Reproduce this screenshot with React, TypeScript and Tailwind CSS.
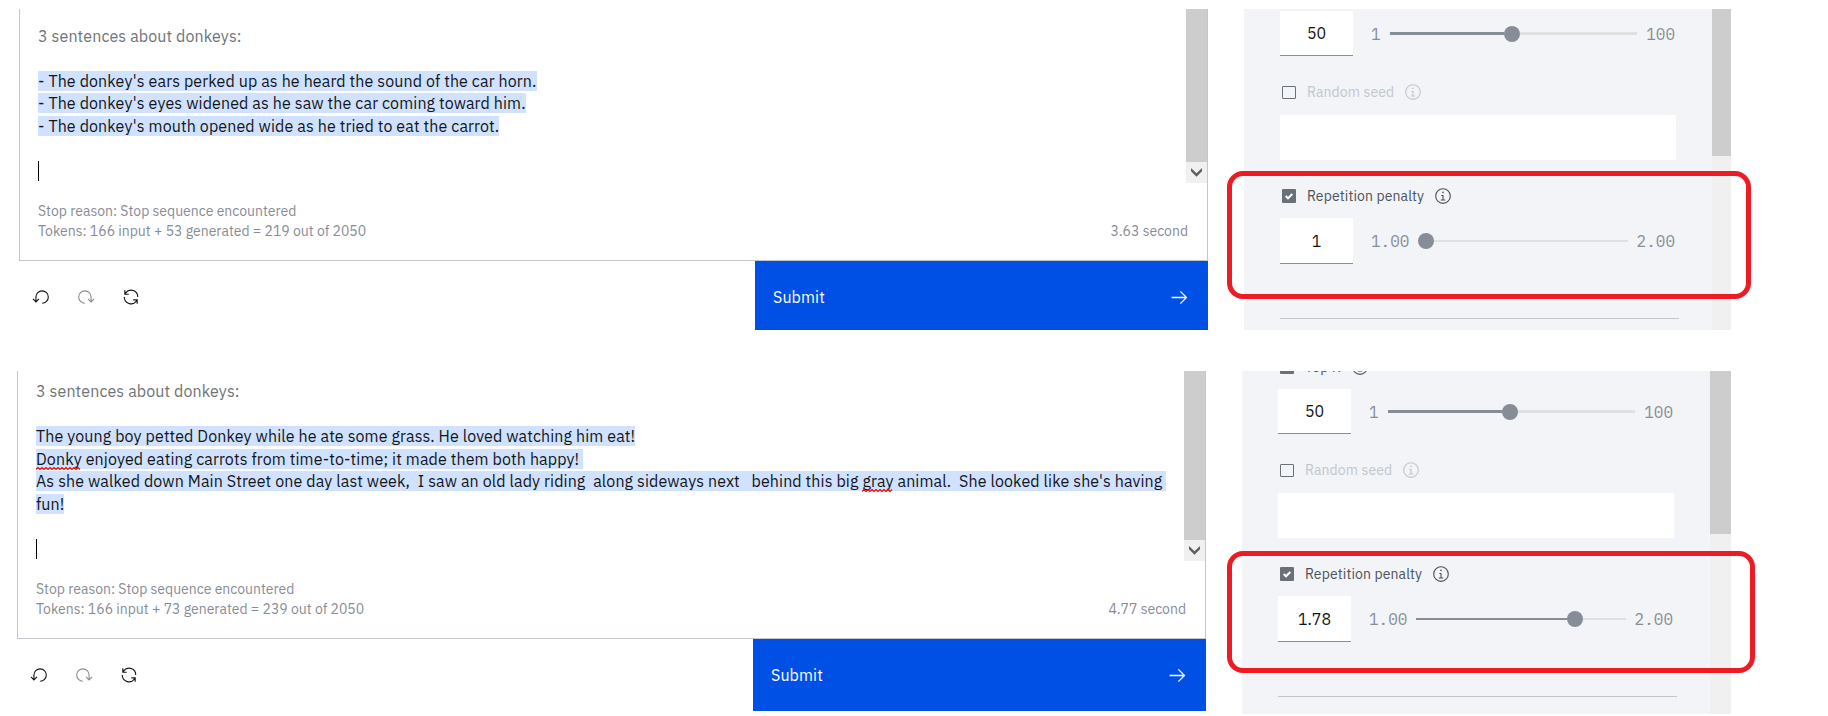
import type { ReactNode } from "react";

const SANS = "font-['IBM_Plex_Sans',Roboto,sans-serif]";
const MONO = "font-['IBM_Plex_Mono','Liberation_Mono',monospace]";

function UndoIcon() {
  return (
    <svg width="18" height="18" viewBox="0 0 32 32" fill="#161616">
      <path d="M18,28A12,12,0,1,0,6,16v6.2L2.4,18.6,1,20l6,6,6-6-1.4-1.4L8,22.2V16H8A10,10,0,1,1,18,26Z" />
    </svg>
  );
}

function RedoIcon() {
  return (
    <svg width="18" height="18" viewBox="0 0 32 32" fill="#8d8d8d">
      <path
        transform="translate(32 0) scale(-1 1)"
        d="M18,28A12,12,0,1,0,6,16v6.2L2.4,18.6,1,20l6,6,6-6-1.4-1.4L8,22.2V16H8A10,10,0,1,1,18,26Z"
      />
    </svg>
  );
}

function RenewIcon() {
  return (
    <svg width="18" height="18" viewBox="0 0 32 32" fill="#161616">
      <path d="M12,10H6.78A11,11,0,0,1,27,16h2A13,13,0,0,0,6,7.68V4H4v8h8Z" />
      <path d="M20,22h5.22A11,11,0,0,1,5,16H3a13,13,0,0,0,23,8.32V28h2V20H20Z" />
    </svg>
  );
}

function ArrowRightIcon() {
  return (
    <svg width="21" height="21" viewBox="0 0 32 32" fill="#ffffff">
      <path d="M18 6L16.57 7.393 24.15 15H4v2H24.15l-7.58 7.573L18 26 28 16z" />
    </svg>
  );
}

function InfoIcon({ muted }: { muted?: boolean }) {
  return (
    <svg width="18" height="18" viewBox="0 0 32 32" fill={muted ? "#c1c7cd" : "#4d5358"}>
      <path d="M17 22V14H13v2h2v6H12v2h8V22zM16 8a1.5 1.5 0 1 0 1.5 1.5A1.5 1.5 0 0 0 16 8Z" />
      <path d="M16,30A14,14,0,1,1,30,16,14,14,0,0,1,16,30ZM16,4A12,12,0,1,0,28,16,12,12,0,0,0,16,4Z" />
    </svg>
  );
}

function Line({ children }: { children?: ReactNode }) {
  return <div className="h-[22.5px] whitespace-pre">{children}</div>;
}

function Selected({ children }: { children: ReactNode }) {
  return <span className="bg-[#d0e2ff]">{children}</span>;
}

function Misspelled({ children, width }: { children: string; width: number }) {
  let d = "M0 2.5";
  for (let x = 2, up = true; x <= width; x += 2, up = !up) {
    d += ` L${x} ${up ? 0.5 : 2.5}`;
  }
  return (
    <span className="relative">
      {children}
      <svg className="absolute top-[18px] left-0" width={width} height="3" fill="none" stroke="#f00" strokeWidth="1.2">
        <path d={d} />
      </svg>
    </span>
  );
}

function Caret() {
  return <span className="mt-[1.3px] block h-5 w-px bg-black" />;
}

type EditorProps = {
  scrollClass: string;
  padClass: string;
  toolbarClass: string;
  tokens: string;
  time: string;
  children: ReactNode;
};

function Editor({ scrollClass, padClass, toolbarClass, tokens, time, children }: EditorProps) {
  return (
    <div className="w-[1189px] shrink-0">
      <div className="border-x border-b border-[#c1c7cd]">
        <div className={`flex overflow-hidden ${scrollClass}`}>
          <div className={`flex-1 pl-[18px] text-[16px] leading-[22.5px] tracking-[0.115px] text-[#121619] ${padClass}`}>
            {children}
          </div>
          <div className="flex w-[21px] flex-col">
            <div className="flex-1 bg-[#cdcdcd]" />
            <div className="flex h-[21px] items-center justify-center bg-[#f0f0f0]">
              <svg width="11" height="9" viewBox="0 0 11 9" fill="#606060">
                <path d="M0 0L5.5 5.3 11 0V3.2L5.5 8.7 0 3.2Z" />
              </svg>
            </div>
          </div>
        </div>
        <div className="flex items-end justify-between pt-[18px] pr-[19px] pb-[19px] pl-[18px] text-[14px] leading-5 tracking-[-0.01px] text-[#878d96]">
          <div>
            <div>Stop reason: Stop sequence encountered</div>
            <div>{tokens}</div>
          </div>
          <div>{time}</div>
        </div>
      </div>
      <div className={`flex items-start justify-between overflow-hidden ${toolbarClass}`}>
        <div className="flex h-[72px] items-center gap-[27px] pl-[13px]">
          <UndoIcon />
          <RedoIcon />
          <RenewIcon />
        </div>
        <button className="flex h-[72px] w-[453px] items-center justify-between bg-[#0050e6] px-[18px] text-[16px] tracking-[0.11px] text-white">
          <span>Submit</span>
          <ArrowRightIcon />
        </button>
      </div>
    </div>
  );
}

function Option({ label, checked }: { label: string; checked: boolean }) {
  return (
    <div className="flex h-5 items-center pl-[2px]">
      {checked ? (
        <span className="flex size-[14px] items-center justify-center rounded-[1px] bg-[#697077]">
          <svg width="8" height="7" viewBox="0 0 8 7" fill="none" stroke="#fff" strokeWidth="2">
            <path d="M0.7 3L3 5.3 7.3 1" />
          </svg>
        </span>
      ) : (
        <span className="mt-[1px] h-[13px] w-[14px] rounded-[1px] border border-[#697077]" />
      )}
      <span
        className={`mr-[10px] ml-[11px] text-[14px] leading-5 tracking-[0.12px] ${checked ? "text-[#4d5358]" : "text-[#c1c7cd]"}`}
      >
        {label}
      </span>
      <InfoIcon muted={!checked} />
    </div>
  );
}

type SliderProps = {
  value: string;
  min: string;
  max: string;
  fraction: number;
  boxClass: string;
  trackClass: string;
};

function Slider({ value, min, max, fraction, boxClass, trackClass }: SliderProps) {
  return (
    <div className="flex w-[395px] items-center">
      <div
        className={`flex w-[73px] shrink-0 items-center justify-center border-b border-[#8d8d8d] bg-white text-[16px] text-[#121619] ${boxClass}`}
      >
        {value}
      </div>
      <span className={`mr-[9px] ml-[18px] text-[16px] text-[#878d96] ${MONO}`}>{min}</span>
      <div className="flex flex-1 items-center">
        <div className={`bg-[#878d96] ${trackClass}`} style={{ flex: `${fraction} 1 0px` }} />
        <div className="size-4 shrink-0 rounded-full bg-[#878d96]" />
        <div className={`bg-[#e0e0e0] ${trackClass}`} style={{ flex: `${1 - fraction} 1 0px` }} />
      </div>
      <span className={`ml-[9px] text-[16px] text-[#878d96] ${MONO}`}>{max}</span>
    </div>
  );
}

type ParametersProps = {
  panelClass: string;
  bodyClass: string;
  barClass: string;
  thumbClass: string;
  penalty: string;
  fraction: number;
  topLabel?: boolean;
};

function Parameters({ panelClass, bodyClass, barClass, thumbClass, penalty, fraction, topLabel }: ParametersProps) {
  return (
    <div className={`ml-9 flex shrink-0 overflow-hidden bg-[#f2f4f8] ${panelClass}`}>
      <div className={`flex-1 pl-9 ${bodyClass}`}>
        {topLabel && (
          <div className="-mt-[14px] mb-3">
            <Option label="Top K" checked />
          </div>
        )}
        <Slider value="50" min="1" max="100" fraction={0.495} boxClass="h-[45px]" trackClass="h-[3px]" />
        <div className="mt-[26px] mb-[13px]">
          <Option label="Random seed" checked={false} />
        </div>
        <div className="h-[45px] w-[396px] bg-white" />
        <div className="mt-[26px] mb-3">
          <Option label="Repetition penalty" checked />
        </div>
        <Slider value={penalty} min="1.00" max="2.00" fraction={fraction} boxClass="h-[46px]" trackClass="h-[2px]" />
        <div className="mt-[54px] h-px w-[399px] bg-[#c1c7cd]" />
      </div>
      <div className={`bg-[#f0f0f0] ${barClass}`}>
        <div className={`bg-[#cdcdcd] ${thumbClass}`} />
      </div>
    </div>
  );
}

export default function App() {
  return (
    <div className={`relative flex h-[716px] w-[1828px] flex-col gap-[41px] overflow-hidden bg-white pt-[9px] ${SANS}`}>
      <section className="flex h-[321px] items-start pl-[19px]">
        <Editor
          scrollClass="h-[174px]"
          padClass="pt-[15.7px]"
          toolbarClass="h-[69px]"
          tokens="Tokens: 166 input + 53 generated = 219 out of 2050"
          time="3.63 second"
        >
          <Line>
            <span className="text-[#6f7479]">3 sentences about donkeys:</span>
          </Line>
          <Line />
          <Line>
            <Selected>- The donkey's ears perked up as he heard the sound of the car horn.</Selected>
          </Line>
          <Line>
            <Selected>- The donkey's eyes widened as he saw the car coming toward him.</Selected>
          </Line>
          <Line>
            <Selected>- The donkey's mouth opened wide as he tried to eat the carrot.</Selected>
          </Line>
          <Line />
          <Line>
            <Caret />
          </Line>
        </Editor>
        <Parameters
          panelClass="h-[321px] w-[487px]"
          bodyClass="pt-[2px]"
          barClass="w-[19px]"
          thumbClass="h-[147px]"
          penalty="1"
          fraction={0}
        />
      </section>
      <section className="flex h-[343px] items-start pl-[17px]">
        <Editor
          scrollClass="h-[190px]"
          padClass="pt-[9px]"
          toolbarClass="h-[72px]"
          tokens="Tokens: 166 input + 73 generated = 239 out of 2050"
          time="4.77 second"
        >
          <Line>
            <span className="text-[#6f7479]">3 sentences about donkeys:</span>
          </Line>
          <Line />
          <Line>
            <Selected>The young boy petted Donkey while he ate some grass. He loved watching him eat!</Selected>
          </Line>
          <Line>
            <Selected>
              <Misspelled width={45}>Donky</Misspelled>
              {" enjoyed eating carrots from time-to-time; it made them both happy! "}
            </Selected>
          </Line>
          <Line>
            <Selected>
              {"As she walked down Main Street one day last week,  I saw an old lady riding  along sideways next   behind this big "}
              <Misspelled width={31}>gray</Misspelled>
              {" animal.  She looked like she's having "}
            </Selected>
          </Line>
          <Line>
            <Selected>fun!</Selected>
          </Line>
          <Line />
          <Line>
            <Caret />
          </Line>
        </Editor>
        <Parameters
          panelClass="h-[343px] w-[489px]"
          bodyClass=""
          barClass="w-[21px]"
          thumbClass="h-[163px]"
          penalty="1.78"
          fraction={0.78}
          topLabel
        />
      </section>
      <div className="absolute top-[171px] left-[1227px] h-[128px] w-[524px] rounded-[16px] border-5 border-[#ed1c24]" />
      <div className="absolute top-[551px] left-[1227px] h-[122px] w-[528px] rounded-[16px] border-5 border-[#ed1c24]" />
    </div>
  );
}
